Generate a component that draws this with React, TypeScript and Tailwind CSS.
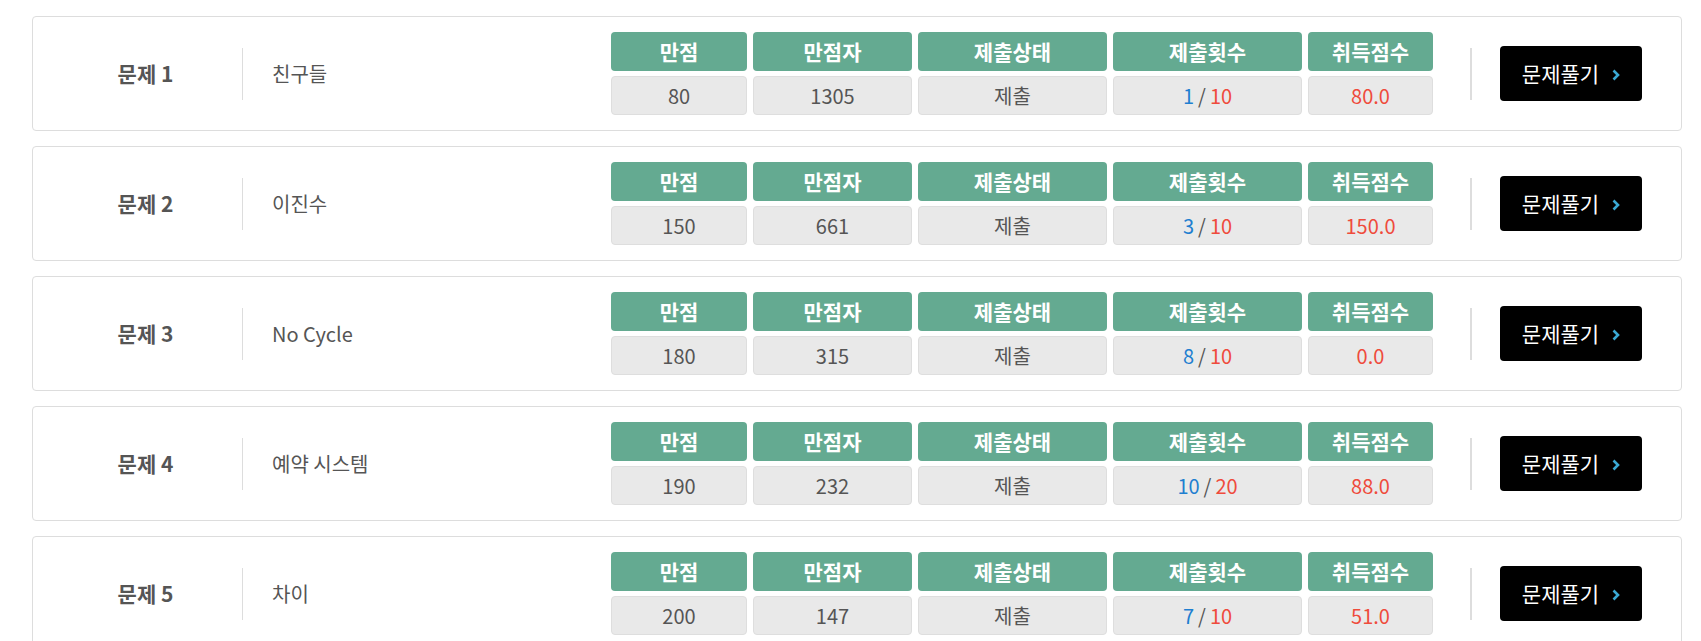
import React from "react";

type Problem = {
  no: number;
  title: string;
  max: number;
  perfect: number;
  status: string;
  tries: number;
  limit: number;
  score: string;
};

const PROBLEMS: Problem[] = [
  { no: 1, title: "친구들", max: 80, perfect: 1305, status: "제출", tries: 1, limit: 10, score: "80.0" },
  { no: 2, title: "이진수", max: 150, perfect: 661, status: "제출", tries: 3, limit: 10, score: "150.0" },
  { no: 3, title: "No Cycle", max: 180, perfect: 315, status: "제출", tries: 8, limit: 10, score: "0.0" },
  { no: 4, title: "예약 시스템", max: 190, perfect: 232, status: "제출", tries: 10, limit: 20, score: "88.0" },
  { no: 5, title: "차이", max: 200, perfect: 147, status: "제출", tries: 7, limit: 10, score: "51.0" },
];

const HEADERS = ["만점", "만점자", "제출상태", "제출횟수", "취득점수"];

const cell =
  "flex h-[39px] items-center justify-center rounded-[4px] border border-[#dedede] bg-[#e9e9e9] text-[20px]";

function ProblemCard({ p }: { p: Problem }) {
  return (
    <div className="flex h-[115px] w-[1650px] items-center rounded-[4px] border border-[#dddddd] bg-white pr-[39px]">
      <div className="w-[209px] pl-[16px] text-center text-[21px] font-bold text-[#555555]">
        문제 {p.no}
      </div>
      <div className="h-[52px] w-px bg-[#dddddd]" />
      <div className="flex-1 pl-[29px] text-[20px] text-[#555555]">{p.title}</div>

      <div className="grid grid-cols-[136px_159px_189px_189px_125px] gap-x-[6px] gap-y-[5px]">
        {HEADERS.map((h) => (
          <div
            key={h}
            className="flex h-[39px] items-center justify-center rounded-[4px] bg-[#64aa91] text-[21px] font-bold text-white"
          >
            {h}
          </div>
        ))}
        <div className={`${cell} text-[#555555]`}>{p.max}</div>
        <div className={`${cell} text-[#555555]`}>{p.perfect}</div>
        <div className={`${cell} text-[#555555]`}>{p.status}</div>
        <div className={`${cell} text-[#555555]`}>
          <span className="text-[#1f7fd0]">{p.tries}</span>
          <span className="mx-[4px]">/</span>
          <span className="text-[#ef4b3c]">{p.limit}</span>
        </div>
        <div className={`${cell} text-[#ef4b3c]`}>{p.score}</div>
      </div>

      <div className="ml-[37px] h-[52px] w-[2px] bg-[#dddddd]" />
      <button className="ml-[28px] flex h-[55px] w-[142px] items-center justify-center gap-[13px] rounded-[4px] bg-black text-[21px] text-white">
        문제풀기
        <svg width="8" height="12" viewBox="0 0 8 12" className="mt-[2px]">
          <path d="M1.5 1.5 L6 6 L1.5 10.5" fill="none" stroke="#3aa9d4" strokeWidth="2.6" />
        </svg>
      </button>
    </div>
  );
}

export default function App() {
  return (
    <div
      className="flex min-h-[641px] flex-col gap-[15px] bg-white pl-[32px] pt-[16px]"
      style={{ fontFamily: '"Noto Sans CJK KR", "Noto Sans", sans-serif' }}
    >
      {PROBLEMS.map((p) => (
        <ProblemCard key={p.no} p={p} />
      ))}
    </div>
  );
}
